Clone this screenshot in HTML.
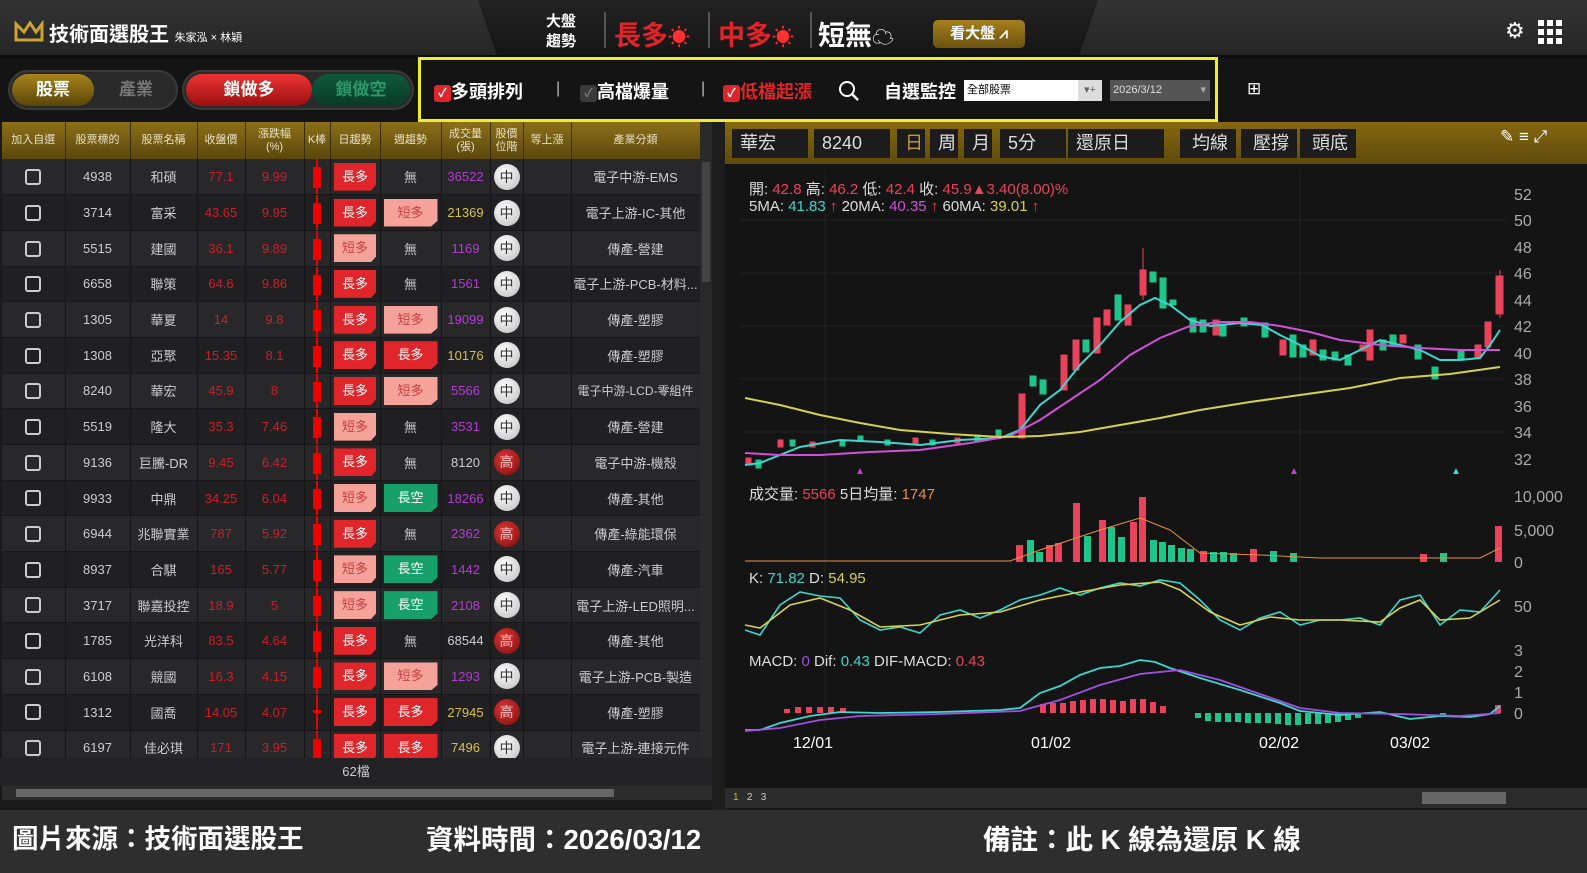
<!DOCTYPE html>
<html><head><meta charset="utf-8">
<style>
*{margin:0;padding:0;box-sizing:border-box}
body{width:1587px;height:873px;background:#1a1a1a;font-family:"Liberation Sans","Noto Sans CJK TC",sans-serif;color:#ddd;position:relative;overflow:hidden}
.abs{position:absolute}
#top{left:0;top:0;width:1587px;height:55px;background:linear-gradient(#333,#262626)}
#trap{left:478px;top:0;width:620px;height:55px;background:linear-gradient(#222,#161616);clip-path:polygon(0 0,100% 0,97% 100%,3% 100%)}
#bar2{left:0;top:55px;width:1587px;height:67px;background:#141414;border-top:3px solid #0d0d0d}
.pill{position:absolute;top:70px;height:40px;border-radius:20px;background:#2a2a2a;border:2px solid #3a3a3a}
.pon{position:absolute;top:2px;height:32px;border-radius:16px;text-align:center;line-height:32px;font-size:17px;font-weight:bold}
table{border-collapse:collapse;table-layout:fixed}
#tbl{position:absolute;left:2px;top:122px;width:698px}
#tbl th{height:37px;background:linear-gradient(#8c7018,#5b470c);color:#e8e0c8;font-weight:normal;font-size:11px;border-right:1px solid #3a2e08;line-height:13px}
#tbl td{height:35.7px;text-align:center;font-size:13px;border-right:1px solid #151515;border-bottom:1px solid #181818;color:#ccc}
#tbl tr{height:35.7px}
#tbl tr:first-child{height:37px}
#tbl tr:nth-child(odd) td{background:#202022}
#tbl tr:nth-child(even) td{background:#28282b}
.cb{display:inline-block;width:16px;height:16px;border:2px solid #ccc;border-radius:3px;vertical-align:middle}
.r{color:#c8202a!important}
.pu{color:#b53ad6!important}.ye{color:#d8c040!important}
.b{display:inline-block;width:42px;height:28px;line-height:28px;color:#fff;clip-path:polygon(0 0,100% 0,100% 80%,88% 100%,0 100%)}
.LD{background:#e0262a}.SD{background:#f5a29a;color:#c94040}.LK{background:#17a06a}
.b2{width:54px}
.c{display:inline-block;width:26px;height:26px;border-radius:50%;line-height:26px;font-size:14px}
.m{background:radial-gradient(circle at 40% 35%,#fff,#bbb);color:#333}
.h{background:radial-gradient(circle at 40% 35%,#d33,#7a0e0e);color:#f3c0c0}
.k{position:relative}
.k i{position:absolute;left:50%;top:0;bottom:0;width:2px;margin-left:-1px;background:#e00}
.k b{position:absolute;left:50%;top:8px;bottom:6px;width:8px;margin-left:-4px;background:#e00}
#ctb{left:725px;top:122px;width:862px;height:42px;background:linear-gradient(#85680f,#5e4a0c)}
.tb{position:absolute;top:7px;height:29px;background:#1c1c1c;color:#ddd;font-size:18px;line-height:29px;padding-left:8px}
#foot{left:0;top:810px;width:1587px;height:63px;background:#2e2e2e;font-size:26.5px;color:#fff;font-weight:bold}
</style></head><body>
<div id="top" class="abs"></div>
<div id="trap" class="abs"></div>
<svg class="abs" style="left:14px;top:20px" width="30" height="22"><path d="M2 20V4l8 8 6-9 6 9 6-8v16z" fill="none" stroke="#c9a434" stroke-width="3"/></svg>
<div class="abs" style="left:49px;top:18px;font-size:20px;font-weight:bold;color:#fff">技術面選股王 <span style="font-size:11px;font-weight:normal">朱家泓 × 林穎</span></div>
<div class="abs" style="left:546px;top:12px;font-size:15px;line-height:20px;color:#fff;font-weight:bold">大盤<br>趨勢</div>
<div class="abs" style="left:604px;top:12px;width:2px;height:36px;background:#555"></div>
<div class="abs" style="left:614px;top:14px;font-size:27px;font-weight:bold;color:#e0252a">長多<span style="color:#ff3030;font-size:22px">☀</span></div>
<div class="abs" style="left:708px;top:12px;width:2px;height:36px;background:#555"></div>
<div class="abs" style="left:718px;top:14px;font-size:27px;font-weight:bold;color:#e0252a">中多<span style="color:#ff3030;font-size:22px">☀</span></div>
<div class="abs" style="left:810px;top:12px;width:2px;height:36px;background:#555"></div>
<div class="abs" style="left:818px;top:14px;font-size:27px;font-weight:bold;color:#fff">短無<span style="font-size:22px">☁</span></div>
<div class="abs" style="left:933px;top:20px;width:92px;height:28px;border-radius:5px;background:linear-gradient(#a5801c,#6b520e);color:#fff;font-size:15px;line-height:28px;text-align:center;font-weight:bold">看大盤 ⩘</div>
<div class="abs" style="left:1505px;top:18px;font-size:22px;color:#fff">⚙</div>
<svg class="abs" style="left:1538px;top:20px" width="24" height="24"><g fill="#fff"><rect x="0" y="0" width="6" height="6"/><rect x="9" y="0" width="6" height="6"/><rect x="18" y="0" width="6" height="6"/><rect x="0" y="9" width="6" height="6"/><rect x="9" y="9" width="6" height="6"/><rect x="18" y="9" width="6" height="6"/><rect x="0" y="18" width="6" height="6"/><rect x="9" y="18" width="6" height="6"/><rect x="18" y="18" width="6" height="6"/></g></svg>

<div id="bar2" class="abs"></div>
<div class="pill" style="left:8px;width:170px"><div class="pon" style="left:2px;width:82px;background:linear-gradient(#a8841e,#5a4508);color:#fff">股票</div><div class="pon" style="left:86px;width:80px;color:#777">產業</div></div>
<div class="pill" style="left:182px;width:232px"><div class="pon" style="left:2px;width:126px;background:linear-gradient(#e33,#9a1010);color:#fff">鎖做多</div><div class="pon" style="left:128px;width:98px;background:linear-gradient(#0f5a3c,#0a3a28);color:#2a9a6a">鎖做空</div></div>
<div class="abs" style="left:418px;top:57px;width:800px;height:65px;border:3px solid #f0ec28"></div>
<div class="abs" style="left:434px;top:78px;font-size:18px;color:#fff;font-weight:bold"><span style="display:inline-block;width:17px;height:17px;background:#e0252a;border-radius:3px;font-size:12px;text-align:center;line-height:17px;vertical-align:1px">✓</span>多頭排列</div>
<div class="abs" style="left:556px;top:80px;color:#bbb;font-size:16px">|</div>
<div class="abs" style="left:580px;top:78px;font-size:18px;color:#fff;font-weight:bold"><span style="display:inline-block;width:17px;height:17px;background:#3a3a3a;border-radius:3px;font-size:12px;color:#777;text-align:center;line-height:17px;vertical-align:1px">✓</span>高檔爆量</div>
<div class="abs" style="left:701px;top:80px;color:#bbb;font-size:16px">|</div>
<div class="abs" style="left:723px;top:78px;font-size:18px;color:#e0252a;font-weight:bold"><span style="display:inline-block;width:17px;height:17px;background:#e0252a;color:#fff;border-radius:3px;font-size:12px;text-align:center;line-height:17px;vertical-align:1px">✓</span>低檔起漲</div>
<svg class="abs" style="left:838px;top:80px" width="22" height="22"><circle cx="9" cy="9" r="7" stroke="#fff" stroke-width="2" fill="none"/><path d="M14 14l6 6" stroke="#fff" stroke-width="2.5"/></svg>
<div class="abs" style="left:884px;top:78px;font-size:18px;color:#fff;font-weight:bold">自選監控</div>
<div class="abs" style="left:964px;top:80px;width:138px;height:21px;background:#fff;color:#000;font-size:11px;line-height:21px;padding-left:3px">全部股票<span style="position:absolute;right:0;top:0;width:24px;height:21px;background:#ddd;color:#666;text-align:center">▾+</span></div>
<div class="abs" style="left:1110px;top:80px;width:100px;height:21px;background:#555;color:#ddd;font-size:11px;line-height:21px;padding-left:3px">2026/3/12<span style="position:absolute;right:4px;color:#aaa">▾</span></div>
<div class="abs" style="left:1247px;top:79px;font-size:17px;color:#fff">⊞</div>

<table id="tbl">
<colgroup><col style="width:63px"><col style="width:65px"><col style="width:67px"><col style="width:48px"><col style="width:59px"><col style="width:26px"><col style="width:50px"><col style="width:61px"><col style="width:49px"><col style="width:33px"><col style="width:48px"><col style="width:129px"></colgroup>
<tr><th>加入自選</th><th>股票標的</th><th>股票名稱</th><th>收盤價</th><th>漲跌幅<br>(%)</th><th>K棒</th><th>日趨勢</th><th>週趨勢</th><th>成交量<br>(張)</th><th>股價<br>位階</th><th>等上漲</th><th>產業分類</th></tr>
<tr><td><span class="cb"></span></td><td>4938</td><td>和碩</td><td class="r">77.1</td><td class="r">9.99</td><td class="k"><i></i><b></b></td><td><span class="b LD">長多</span></td><td>無</td><td class="pu">36522</td><td><span class="c m">中</span></td><td></td><td>電子中游-EMS</td></tr>
<tr><td><span class="cb"></span></td><td>3714</td><td>富采</td><td class="r">43.65</td><td class="r">9.95</td><td class="k"><i></i><b></b></td><td><span class="b LD">長多</span></td><td><span class="b b2 SD">短多</span></td><td class="ye">21369</td><td><span class="c m">中</span></td><td></td><td>電子上游-IC-其他</td></tr>
<tr><td><span class="cb"></span></td><td>5515</td><td>建國</td><td class="r">36.1</td><td class="r">9.89</td><td class="k"><i></i><b></b></td><td><span class="b SD">短多</span></td><td>無</td><td class="pu">1169</td><td><span class="c m">中</span></td><td></td><td>傳產-營建</td></tr>
<tr><td><span class="cb"></span></td><td>6658</td><td>聯策</td><td class="r">64.6</td><td class="r">9.86</td><td class="k"><i></i><b></b></td><td><span class="b LD">長多</span></td><td>無</td><td class="pu">1561</td><td><span class="c m">中</span></td><td></td><td>電子上游-PCB-材料...</td></tr>
<tr><td><span class="cb"></span></td><td>1305</td><td>華夏</td><td class="r">14</td><td class="r">9.8</td><td class="k"><i></i><b></b></td><td><span class="b LD">長多</span></td><td><span class="b b2 SD">短多</span></td><td class="pu">19099</td><td><span class="c m">中</span></td><td></td><td>傳產-塑膠</td></tr>
<tr><td><span class="cb"></span></td><td>1308</td><td>亞聚</td><td class="r">15.35</td><td class="r">8.1</td><td class="k"><i></i><b></b></td><td><span class="b LD">長多</span></td><td><span class="b b2 LD">長多</span></td><td class="ye">10176</td><td><span class="c m">中</span></td><td></td><td>傳產-塑膠</td></tr>
<tr><td><span class="cb"></span></td><td>8240</td><td>華宏</td><td class="r">45.9</td><td class="r">8</td><td class="k"><i></i><b></b></td><td><span class="b LD">長多</span></td><td><span class="b b2 SD">短多</span></td><td class="pu">5566</td><td><span class="c m">中</span></td><td></td><td style="font-size:12px">電子中游-LCD-零組件</td></tr>
<tr><td><span class="cb"></span></td><td>5519</td><td>隆大</td><td class="r">35.3</td><td class="r">7.46</td><td class="k"><i></i><b></b></td><td><span class="b SD">短多</span></td><td>無</td><td class="pu">3531</td><td><span class="c m">中</span></td><td></td><td>傳產-營建</td></tr>
<tr><td><span class="cb"></span></td><td>9136</td><td>巨騰-DR</td><td class="r">9.45</td><td class="r">6.42</td><td class="k"><i></i><b></b></td><td><span class="b LD">長多</span></td><td>無</td><td>8120</td><td><span class="c h">高</span></td><td></td><td>電子中游-機殼</td></tr>
<tr><td><span class="cb"></span></td><td>9933</td><td>中鼎</td><td class="r">34.25</td><td class="r">6.04</td><td class="k"><i></i><b></b></td><td><span class="b SD">短多</span></td><td><span class="b b2 LK">長空</span></td><td class="pu">18266</td><td><span class="c m">中</span></td><td></td><td>傳產-其他</td></tr>
<tr><td><span class="cb"></span></td><td>6944</td><td>兆聯實業</td><td class="r">787</td><td class="r">5.92</td><td class="k"><i></i><b></b></td><td><span class="b LD">長多</span></td><td>無</td><td class="pu">2362</td><td><span class="c h">高</span></td><td></td><td>傳產-綠能環保</td></tr>
<tr><td><span class="cb"></span></td><td>8937</td><td>合騏</td><td class="r">165</td><td class="r">5.77</td><td class="k"><i></i><b></b></td><td><span class="b SD">短多</span></td><td><span class="b b2 LK">長空</span></td><td class="pu">1442</td><td><span class="c m">中</span></td><td></td><td>傳產-汽車</td></tr>
<tr><td><span class="cb"></span></td><td>3717</td><td>聯嘉投控</td><td class="r">18.9</td><td class="r">5</td><td class="k"><i></i><b></b></td><td><span class="b SD">短多</span></td><td><span class="b b2 LK">長空</span></td><td class="pu">2108</td><td><span class="c m">中</span></td><td></td><td>電子上游-LED照明...</td></tr>
<tr><td><span class="cb"></span></td><td>1785</td><td>光洋科</td><td class="r">83.5</td><td class="r">4.64</td><td class="k"><i></i><b></b></td><td><span class="b LD">長多</span></td><td>無</td><td>68544</td><td><span class="c h">高</span></td><td></td><td>傳產-其他</td></tr>
<tr><td><span class="cb"></span></td><td>6108</td><td>競國</td><td class="r">16.3</td><td class="r">4.15</td><td class="k"><i></i><b></b></td><td><span class="b LD">長多</span></td><td><span class="b b2 SD">短多</span></td><td class="pu">1293</td><td><span class="c m">中</span></td><td></td><td>電子上游-PCB-製造</td></tr>
<tr><td><span class="cb"></span></td><td>1312</td><td>國喬</td><td class="r">14.05</td><td class="r">4.07</td><td class="k"><i></i><b style="top:15px;bottom:17px"></b></td><td><span class="b LD">長多</span></td><td><span class="b b2 LD">長多</span></td><td class="ye">27945</td><td><span class="c h">高</span></td><td></td><td>傳產-塑膠</td></tr>
<tr><td><span class="cb"></span></td><td>6197</td><td>佳必琪</td><td class="r">171</td><td class="r">3.95</td><td class="k"><i></i><b></b></td><td><span class="b LD">長多</span></td><td><span class="b b2 LD">長多</span></td><td class="ye">7496</td><td><span class="c m">中</span></td><td></td><td>電子上游-連接元件</td></tr>
</table>
<div class="abs" style="left:700px;top:122px;width:12px;height:636px;background:#2a2a2a"><div style="margin:40px 2px;height:120px;background:#444"></div></div>
<div class="abs" style="left:0;top:758px;width:712px;height:28px;background:#232326;text-align:center;font-size:13px;line-height:28px;color:#ccc">62檔</div>
<div class="abs" style="left:2px;top:786px;width:710px;height:14px;background:#2c2c2c"><div style="margin:3px 0 0 14px;width:598px;height:8px;background:#666"></div></div>
<div class="abs" style="left:0;top:800px;width:1587px;height:10px;background:#1a1a1a"></div>
<div class="abs" style="left:712px;top:122px;width:13px;height:688px;background:#1e1e1e"></div>

<div id="ctb" class="abs"></div>
<div class="tb" style="left:732px;top:129px;width:76px">華宏</div>
<div class="tb" style="left:814px;top:129px;width:76px">8240</div>
<div class="tb" style="left:897px;top:129px;width:28px;color:#c99a30">日</div>
<div class="tb" style="left:930px;top:129px;width:28px">周</div>
<div class="tb" style="left:964px;top:129px;width:28px">月</div>
<div class="tb" style="left:1000px;top:129px;width:66px">5分</div>
<div class="tb" style="left:1068px;top:129px;width:96px">還原日</div>
<div class="tb" style="left:1180px;top:129px;width:56px;padding-left:12px">均線</div>
<div class="tb" style="left:1241px;top:129px;width:56px;padding-left:12px">壓撐</div>
<div class="tb" style="left:1300px;top:129px;width:56px;padding-left:12px">頭底</div>
<div class="abs" style="left:1500px;top:127px;color:#fff;font-size:17px">✎ ≡ ⤢</div>
<div class="abs" style="left:725px;top:164px;width:862px;height:624px;background:#141414"></div>
<svg class="abs" style="left:0;top:0" width="1587" height="810" font-family="Liberation Sans,Noto Sans CJK TC,sans-serif">
<g stroke="#222" stroke-width="1"><line x1="740" y1="220" x2="1505" y2="220"/><line x1="740" y1="273" x2="1505" y2="273"/><line x1="740" y1="326" x2="1505" y2="326"/><line x1="740" y1="379" x2="1505" y2="379"/><line x1="740" y1="432" x2="1505" y2="432"/><line x1="1300" y1="170" x2="1300" y2="730"/><line x1="825" y1="170" x2="825" y2="730"/></g>
<g fill="#aaa" font-size="16"><text x="1514" y="200">52</text><text x="1514" y="226">50</text><text x="1514" y="253">48</text><text x="1514" y="279">46</text><text x="1514" y="306">44</text><text x="1514" y="332">42</text><text x="1514" y="359">40</text><text x="1514" y="385">38</text><text x="1514" y="412">36</text><text x="1514" y="438">34</text><text x="1514" y="465">32</text>
<text x="1514" y="502">10,000</text><text x="1514" y="536">5,000</text><text x="1514" y="568">0</text><text x="1514" y="612">50</text><text x="1514" y="656">3</text><text x="1514" y="677">2</text><text x="1514" y="698">1</text><text x="1514" y="719">0</text></g>
<text x="749" y="194" font-size="15" fill="#ddd">開: <tspan fill="#e8435a">42.8</tspan> 高: <tspan fill="#e8435a">46.2</tspan> 低: <tspan fill="#e8435a">42.4</tspan> 收: <tspan fill="#e8435a">45.9▲3.40(8.00)%</tspan></text>
<text x="749" y="211" font-size="15" fill="#ddd">5MA: <tspan fill="#3dd6d0">41.83</tspan> <tspan fill="#e8435a">↑</tspan> 20MA: <tspan fill="#d050d8">40.35</tspan> <tspan fill="#e8435a">↑</tspan> 60MA: <tspan fill="#d8d050">39.01</tspan> <tspan fill="#e8435a">↑</tspan></text>
<g fill="#e8435a" stroke="#e8435a">
<rect x="746" y="458" width="5" height="7"/><rect x="778" y="440" width="5" height="7"/><rect x="810" y="442" width="5" height="5"/><rect x="913" y="438" width="5" height="6"/><rect x="955" y="438" width="5" height="5"/><rect x="1019" y="394" width="6" height="44"/><rect x="1061" y="355" width="6" height="35"/><rect x="1073" y="340" width="6" height="30"/><rect x="1094" y="318" width="6" height="35"/><rect x="1104" y="310" width="6" height="15"/><rect x="1125" y="305" width="6" height="20"/><rect x="1140" y="270" width="6" height="25"/><rect x="1213" y="320" width="6" height="15"/><rect x="1280" y="340" width="6" height="15"/><rect x="1310" y="340" width="6" height="15"/><rect x="1367" y="330" width="6" height="30"/><rect x="1360" y="345" width="6" height="6"/><rect x="1400" y="335" width="6" height="8"/><rect x="1475" y="345" width="6" height="13"/><rect x="1485" y="322" width="6" height="25"/><rect x="1496" y="276" width="7" height="38"/>
<line x1="1143" y1="248" x2="1143" y2="300"/><line x1="1500" y1="270" x2="1500" y2="318"/></g>
<g fill="#1fc48a" stroke="#1fc48a">
<rect x="756" y="460" width="5" height="8"/><rect x="790" y="440" width="5" height="6"/><rect x="840" y="440" width="5" height="6"/><rect x="858" y="436" width="5" height="5"/><rect x="885" y="440" width="5" height="5"/><rect x="930" y="440" width="5" height="5"/><rect x="975" y="435" width="5" height="6"/><rect x="996" y="430" width="5" height="8"/><rect x="1030" y="376" width="6" height="10"/><rect x="1040" y="380" width="6" height="14"/><rect x="1083" y="340" width="6" height="12"/><rect x="1115" y="295" width="6" height="25"/><rect x="1150" y="272" width="6" height="10"/><rect x="1160" y="278" width="6" height="30"/><rect x="1170" y="300" width="6" height="5"/><rect x="1190" y="318" width="6" height="14"/><rect x="1200" y="320" width="6" height="12"/><rect x="1220" y="324" width="6" height="12"/><rect x="1241" y="318" width="6" height="8"/><rect x="1262" y="323" width="6" height="14"/><rect x="1290" y="335" width="6" height="22"/><rect x="1300" y="345" width="6" height="12"/><rect x="1320" y="350" width="6" height="10"/><rect x="1332" y="352" width="6" height="8"/><rect x="1345" y="355" width="6" height="10"/><rect x="1380" y="340" width="6" height="10"/><rect x="1390" y="335" width="6" height="10"/><rect x="1415" y="345" width="6" height="14"/><rect x="1432" y="367" width="6" height="12"/><rect x="1458" y="350" width="6" height="10"/></g>
<polyline fill="none" stroke="#3dd6d0" stroke-width="2" points="745,465 760,463 800,447 840,440 880,442 920,445 960,440 1000,438 1020,430 1040,405 1060,390 1080,365 1100,345 1120,322 1140,305 1155,298 1170,305 1190,320 1210,326 1240,323 1262,325 1280,335 1300,345 1320,356 1340,360 1360,350 1380,340 1400,345 1420,350 1440,360 1460,360 1480,358 1490,345 1500,330"/>
<polyline fill="none" stroke="#d050d8" stroke-width="2" points="745,453 780,455 820,455 870,452 920,450 970,443 1010,436 1040,420 1070,400 1100,380 1130,355 1160,338 1190,326 1220,322 1250,322 1280,326 1310,332 1340,340 1380,345 1420,348 1460,350 1500,350"/>
<polyline fill="none" stroke="#d8d050" stroke-width="2" points="745,398 780,405 820,415 860,423 900,430 950,434 1000,437 1040,436 1080,432 1120,425 1160,418 1200,410 1250,402 1300,395 1350,388 1400,378 1450,374 1500,367"/>
<g fill="#c040d0"><path d="M857 474l3-6 3 6z"/><path d="M1291 474l3-6 3 6z"/></g><path d="M1453 474l3-6 3 6z" fill="#3dd6d0"/>
<text x="749" y="499" font-size="15" fill="#ddd">成交量: <tspan fill="#e8435a">5566</tspan> 5日均量: <tspan fill="#e89040">1747</tspan></text>
<g fill="#e8435a"><rect x="1016" y="545" width="7" height="17"/><rect x="1046" y="545" width="7" height="17"/><rect x="1055" y="543" width="7" height="19"/><rect x="1073" y="503" width="7" height="59"/><rect x="1099" y="520" width="7" height="42"/><rect x="1130" y="522" width="7" height="40"/><rect x="1139" y="497" width="7" height="65"/><rect x="1250" y="549" width="7" height="13"/><rect x="1420" y="554" width="7" height="8"/><rect x="1495" y="526" width="7" height="36"/><rect x="1200" y="551" width="7" height="11"/></g>
<g fill="#1fc48a"><rect x="1027" y="540" width="7" height="22"/><rect x="1036" y="552" width="7" height="10"/><rect x="1084" y="536" width="7" height="26"/><rect x="1108" y="527" width="7" height="35"/><rect x="1118" y="537" width="7" height="25"/><rect x="1150" y="540" width="7" height="22"/><rect x="1159" y="542" width="7" height="20"/><rect x="1168" y="545" width="7" height="17"/><rect x="1178" y="548" width="7" height="14"/><rect x="1187" y="549" width="7" height="13"/><rect x="1210" y="552" width="7" height="10"/><rect x="1220" y="552" width="7" height="10"/><rect x="1230" y="553" width="7" height="9"/><rect x="1270" y="551" width="7" height="11"/><rect x="1290" y="553" width="7" height="9"/><rect x="1440" y="553" width="7" height="9"/></g>
<polyline fill="none" stroke="#e89040" stroke-width="1" points="745,561 1010,561 1040,550 1070,540 1100,530 1140,518 1170,530 1200,553 1260,555 1320,558 1480,558 1500,548"/>
<text x="749" y="583" font-size="15" fill="#ddd">K: <tspan fill="#3dd6d0">71.82</tspan> D: <tspan fill="#d8d050">54.95</tspan></text>
<polyline fill="none" stroke="#3dd6d0" stroke-width="1.6" points="745,630 760,635 780,605 800,592 820,596 840,598 860,620 880,630 900,627 920,633 940,615 960,610 980,618 1000,610 1020,600 1040,595 1060,588 1080,595 1100,588 1120,583 1140,586 1160,580 1180,583 1200,600 1220,620 1240,630 1260,618 1280,612 1300,625 1320,620 1340,620 1360,618 1380,625 1400,600 1420,595 1440,625 1460,610 1480,612 1500,590"/>
<polyline fill="none" stroke="#d8d050" stroke-width="1.6" points="745,625 760,628 790,605 820,598 850,610 880,627 920,625 960,615 1000,612 1040,600 1080,592 1120,585 1160,582 1180,590 1210,612 1240,625 1270,617 1300,620 1340,620 1380,622 1400,608 1420,600 1440,620 1470,618 1500,600"/>
<text x="749" y="666" font-size="15" fill="#ddd">MACD: <tspan fill="#a050e0">0</tspan> Dif: <tspan fill="#3dd6d0">0.43</tspan> DIF-MACD: <tspan fill="#e8435a">0.43</tspan></text>
<g fill="#e8435a"><rect x="784" y="709" width="6" height="4"/><rect x="795" y="707" width="6" height="6"/><rect x="806" y="707" width="6" height="6"/><rect x="817" y="707" width="6" height="6"/><rect x="828" y="707" width="6" height="6"/><rect x="840" y="708" width="6" height="5"/><rect x="1040" y="704" width="6" height="9"/><rect x="1050" y="703" width="6" height="10"/><rect x="1060" y="703" width="6" height="10"/><rect x="1070" y="701" width="6" height="12"/><rect x="1080" y="700" width="6" height="13"/><rect x="1090" y="699" width="6" height="14"/><rect x="1100" y="699" width="6" height="14"/><rect x="1110" y="700" width="6" height="13"/><rect x="1120" y="701" width="6" height="12"/><rect x="1130" y="699" width="6" height="14"/><rect x="1140" y="699" width="6" height="14"/><rect x="1150" y="702" width="6" height="11"/><rect x="1160" y="706" width="6" height="7"/><rect x="1495" y="705" width="6" height="8"/></g>
<g fill="#1fc48a"><rect x="1195" y="713" width="6" height="5"/><rect x="1205" y="713" width="6" height="8"/><rect x="1215" y="713" width="6" height="9"/><rect x="1225" y="713" width="6" height="9"/><rect x="1235" y="713" width="6" height="9"/><rect x="1245" y="713" width="6" height="10"/><rect x="1255" y="713" width="6" height="10"/><rect x="1265" y="713" width="6" height="10"/><rect x="1275" y="713" width="6" height="11"/><rect x="1285" y="713" width="6" height="12"/><rect x="1295" y="713" width="6" height="12"/><rect x="1305" y="713" width="6" height="11"/><rect x="1315" y="713" width="6" height="11"/><rect x="1325" y="713" width="6" height="10"/><rect x="1335" y="713" width="6" height="9"/><rect x="1345" y="713" width="6" height="7"/><rect x="1355" y="713" width="6" height="5"/><rect x="1440" y="713" width="6" height="4"/></g>
<polyline fill="none" stroke="#3dd6d0" stroke-width="1.8" points="745,730 760,730 780,723 810,716 840,712 880,713 940,712 1000,710 1020,708 1040,693 1060,686 1080,675 1100,668 1120,666 1140,660 1155,662 1170,668 1200,678 1240,690 1280,703 1300,711 1340,715 1380,712 1410,719 1440,716 1470,717 1490,714 1500,706"/>
<polyline fill="none" stroke="#a050e0" stroke-width="1.8" points="745,731 780,728 820,720 860,716 940,714 1020,711 1060,700 1100,685 1140,674 1180,670 1220,680 1260,694 1300,708 1340,713 1400,714 1460,716 1500,713"/>
<g fill="#fff" font-size="16"><text x="793" y="748">12/01</text><text x="1031" y="748">01/02</text><text x="1259" y="748">02/02</text><text x="1390" y="748">03/02</text></g>
</svg>
<div class="abs" style="left:725px;top:788px;width:862px;height:20px;background:#2c2c2c;font-size:10px;line-height:20px;color:#ccc;padding-left:8px"><span style="color:#d8b040">1</span> &nbsp; 2 &nbsp; 3 &nbsp;<span style="position:absolute;left:697px;top:4px;width:84px;height:12px;background:#666"></span></div>
<div id="foot" class="abs"><span style="position:absolute;left:12px;top:7px">圖片來源：技術面選股王</span><span style="position:absolute;left:426px;top:7px;font-size:27.5px">資料時間：2026/03/12</span><span style="position:absolute;left:983px;top:7px;font-size:27.5px">備註：此 K 線為還原 K 線</span></div>
</body></html>
